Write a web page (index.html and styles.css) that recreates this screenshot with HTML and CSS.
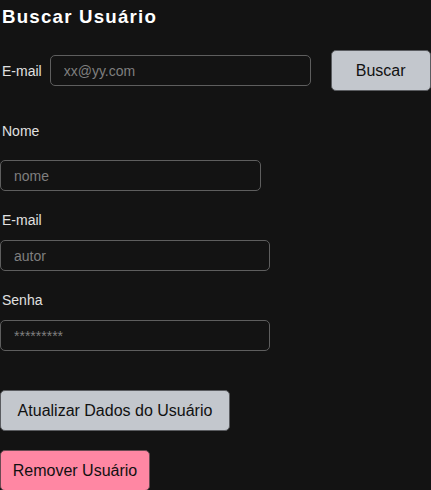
FILE: index.html
```html
<!DOCTYPE html>
<html lang="pt-BR">
<head>
<meta charset="utf-8">
<title>Buscar Usuário</title>
<link rel="stylesheet" href="styles.css">
</head>
<body>
<main class="page">
  <h3 class="title">Buscar Usuário</h3>
  <div class="search-row">
    <label class="label inline-label" for="busca">E-mail</label>
    <input class="field field-short" id="busca" type="text" placeholder="xx@yy.com">
    <button class="btn btn-gray btn-search" type="button">Buscar</button>
  </div>
  <div class="form">
    <label class="label label-first" for="nome">Nome</label>
    <input class="field field-short field-first" id="nome" type="text" placeholder="nome">
    <label class="label" for="email">E-mail</label>
    <input class="field field-long" id="email" type="text" placeholder="autor">
    <label class="label" for="senha">Senha</label>
    <input class="field field-long" id="senha" type="password" placeholder="*********">
    <button class="btn btn-gray btn-update" type="button">Atualizar Dados do Usuário</button>
    <button class="btn btn-pink btn-remove" type="button">Remover Usuário</button>
  </div>
</main>
</body>
</html>
```
FILE: styles.css
```css
html, body {
  margin: 0;
  padding: 0;
  background: #131313;
}
body {
  font-family: "Liberation Sans", Arial, sans-serif;
  color: #e4e4e4;
}
.page {
  display: flex;
  flex-direction: column;
  align-items: flex-start;
}
.title {
  margin: 6px 0 0 2px;
  font-size: 18.72px;
  line-height: 22px;
  font-weight: bold;
  letter-spacing: 1.2px;
  color: #ffffff;
}
.search-row {
  display: flex;
  align-items: center;
  margin-top: 22px;
  width: 431px;
}
.label {
  font-size: 14px;
  line-height: 16px;
  color: #e0e0e0;
  padding-left: 2px;
  white-space: nowrap;
}
.inline-label {
  margin-right: 8px;
  flex-shrink: 0;
}
.field {
  box-sizing: border-box;
  height: 31px;
  border: 1px solid #5e5e5e;
  border-radius: 5px;
  background: #131313;
  color: #e4e4e4;
  font-family: "Liberation Sans", Arial, sans-serif;
  font-size: 14px;
  padding: 0 13px;
  outline: none;
  flex-shrink: 0;
}
.field::placeholder {
  color: #7f7f7f;
}
.field-short {
  width: 261px;
}
.field-long {
  width: 270px;
}
.btn {
  box-sizing: border-box;
  height: 41px;
  border: 1px solid #5a5c60;
  border-radius: 5px;
  font-family: "Liberation Sans", Arial, sans-serif;
  font-size: 16px;
  color: #111111;
  padding: 0;
  flex-shrink: 0;
}
.btn-gray {
  background: #c3c7cd;
}
.btn-pink {
  background: #ff87a3;
  border-color: #6a4a52;
}
.btn-search {
  width: 100px;
  margin-left: 20px;
}
.form {
  display: flex;
  flex-direction: column;
  align-items: flex-start;
  margin-top: 32px;
}
.form .label {
  margin-top: 21px;
}
.form .label-first {
  margin-top: 0;
}
.form .field {
  margin-top: 12px;
}
.form .field-first {
  margin-top: 21px;
}
.btn-update {
  width: 230px;
  margin-top: 39px;
}
.btn-remove {
  width: 150px;
  margin-top: 19px;
}
```
